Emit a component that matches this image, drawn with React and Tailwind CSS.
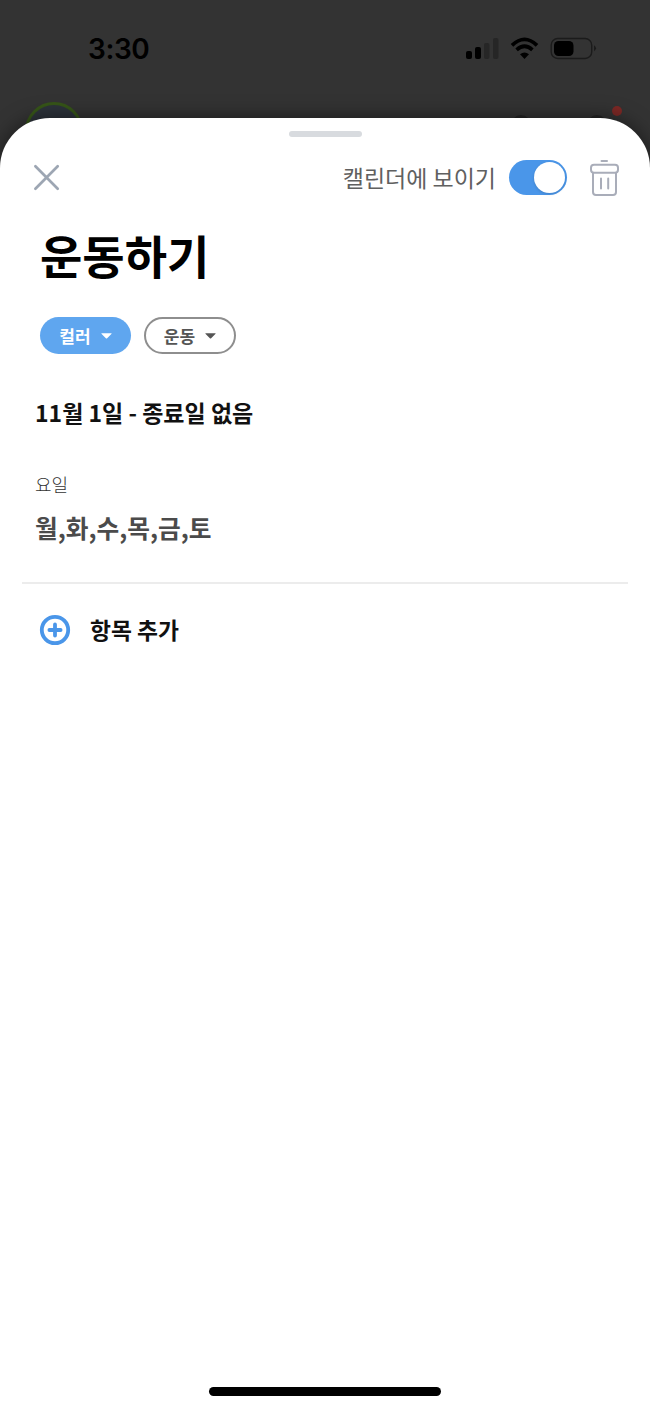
import { useState } from "react";

const App = () => {
    const [showOnCalendar, setShowOnCalendar] = useState(true);

    return (
        <div className="relative flex h-[1409px] w-[650px] flex-col overflow-hidden bg-[#333333] font-['Noto_Sans_CJK_KR',sans-serif]">
            <StatusBar />
            <Backdrop />

            {/* Bottom sheet */}
            <div className="relative flex flex-1 flex-col rounded-t-[50px] bg-white shadow-[0_0_20px_rgba(0,0,0,0.5)]">
                <div className="mx-auto mt-[13px] h-[6px] w-[73px] rounded-full bg-[#d8dbdf]"></div>

                <div className="mt-[19px] flex h-[42px] items-center pr-[30px] pl-[33px]">
                    <button type="button" aria-label="닫기">
                        <CloseIcon />
                    </button>
                    <span className="ml-auto text-[23px] leading-[42px] whitespace-nowrap text-[#606060]">캘린더에 보이기</span>
                    <Toggle checked={showOnCalendar} onChange={setShowOnCalendar} />
                    <button type="button" aria-label="삭제" className="mt-[2px] ml-[22px]">
                        <TrashIcon />
                    </button>
                </div>

                <h1 className="mt-[20px] ml-[40px] text-[46px] leading-[72px] font-bold text-black">운동하기</h1>

                <div className="mt-[27px] ml-[40px] flex gap-[13px]">
                    <Chip label="컬러" className="w-[91px] bg-[#5fa6ef] text-white" />
                    <Chip label="운동" className="w-[92px] border-2 border-[#8e8e8e] bg-white text-[#555555]" />
                </div>

                <div className="mt-[41px] ml-[35px] text-[23px] leading-[34px] font-bold text-[#111111]">11월 1일 - 종료일 없음</div>

                <div className="mt-[42px] ml-[35px] text-[18px] leading-[26px] font-light text-[#333333]">요일</div>
                <div className="mt-[12px] ml-[35px] text-[24.7px] leading-[36px] font-bold text-[#4b4b4b]">월,화,수,목,금,토</div>

                <div className="mx-[22px] mt-[37px] h-[2px] bg-[#ececec]"></div>

                <button type="button" className="mt-[28px] ml-[39px] flex h-[36px] items-center gap-[19px]">
                    <AddIcon />
                    <span className="text-[22.8px] leading-[34px] font-bold text-[#111111]">항목 추가</span>
                </button>

                <div className="mx-auto mt-auto mb-[13px] h-[9px] w-[232px] rounded-full bg-black"></div>
            </div>
        </div>
    );
};

const StatusBar = () => (
    <div className="flex h-[118px] shrink-0 items-start justify-between pt-[34px] pr-[53px] pl-[88px]">
        <span className="font-['Inter',sans-serif] text-[28px] leading-[30px] font-semibold tracking-[-0.4px] text-black">3:30</span>
        <svg width="131" height="24" viewBox="0 0 131 24" className="mt-[3px]">
            <rect x="0" y="14" width="6" height="8" rx="2" fill="#000" />
            <rect x="9" y="10" width="6" height="12" rx="2" fill="#000" />
            <rect x="18" y="6" width="5.5" height="16" rx="2" fill="#262626" />
            <rect x="27" y="1" width="5.5" height="21" rx="2" fill="#262626" />
            <g fill="none" stroke="#000" strokeWidth="3.7">
                <path d="M46 8.3Q58.5 -3.6 71 8.3" />
                <path d="M50.6 12.8Q58.5 5.6 66.4 12.8" />
            </g>
            <path d="M58.5 22l-4.5-4.7q4.5-3.8 9 0z" fill="#000" />
            <rect x="85.2" y="1.5" width="40.5" height="20" rx="6.5" fill="none" stroke="#1b1b1b" strokeWidth="1.4" />
            <rect x="88" y="4" width="19.5" height="15" rx="4.5" fill="#000" />
            <path d="M128 8.3q4 3 0 6z" fill="#1b1b1b" />
        </svg>
    </div>
);

/* Dimmed page peeking out above the sheet */
const Backdrop = () => (
    <>
        <div className="absolute top-[102px] left-[25px] size-[58px] rounded-full border-[3px] border-[#365518] bg-[#2d333b]"></div>
        <div className="absolute top-[115px] left-[511px] size-[20px] rounded-full bg-[#242424]"></div>
        <div className="absolute top-[115px] left-[587px] size-[20px] rounded-full bg-[#242424]"></div>
        <div className="absolute top-[106px] left-[612px] size-[10px] rounded-full bg-[#7c2825]"></div>
    </>
);

const Toggle = ({ checked, onChange }) => (
    <button
        type="button"
        role="switch"
        aria-checked={checked}
        aria-label="캘린더에 보이기"
        onClick={() => onChange(!checked)}
        className={`ml-[13px] flex h-[35px] w-[58px] items-center rounded-full px-[2px] ${checked ? "justify-end bg-[#4a96e9]" : "justify-start bg-gray-300"}`}
    >
        <span className="size-[31px] rounded-full bg-white shadow-[0_1px_3px_rgba(0,0,0,0.15)]"></span>
    </button>
);

const Chip = ({ label, className }) => (
    <button type="button" className={`flex h-[37px] items-center justify-center gap-[10px] rounded-full text-[17px] leading-[24px] font-bold ${className}`}>
        {label}
        <svg width="11" height="6" viewBox="0 0 12 6">
            <path d="M1 0h10q1.2 0 .3 .8L6.7 5.5q-.7 .6-1.4 0L.7 .8Q-.2 0 1 0z" fill="currentColor" />
        </svg>
    </button>
);

const CloseIcon = () => (
    <svg width="27" height="27" viewBox="0 0 27 27" fill="none" stroke="#9da6b3" strokeWidth="2.7" strokeLinecap="round">
        <path d="M2.4 2.2l22.3 22.6M24.7 2.2L2.4 24.8" />
    </svg>
);

const TrashIcon = () => (
    <svg width="31" height="38" viewBox="0 0 31 38" fill="none" stroke="#a9adb9" strokeWidth="2" strokeLinecap="round">
        <path d="M12.5 1.9h5.5" />
        <rect x="2" y="5.8" width="27" height="8" rx="3" />
        <path d="M4 14v19q0 3 3 3h17q3 0 3-3V14" />
        <path d="M12 19.5v10M19.2 19.5v10" />
    </svg>
);

const AddIcon = () => (
    <svg width="32" height="32" viewBox="0 0 32 32" fill="none" stroke="#4a96e9" strokeLinecap="round">
        <circle cx="16" cy="16" r="13.2" strokeWidth="3.8" />
        <path d="M10.4 16h11.2M16 10.4v11.2" strokeWidth="3.8" />
    </svg>
);

export default App;
